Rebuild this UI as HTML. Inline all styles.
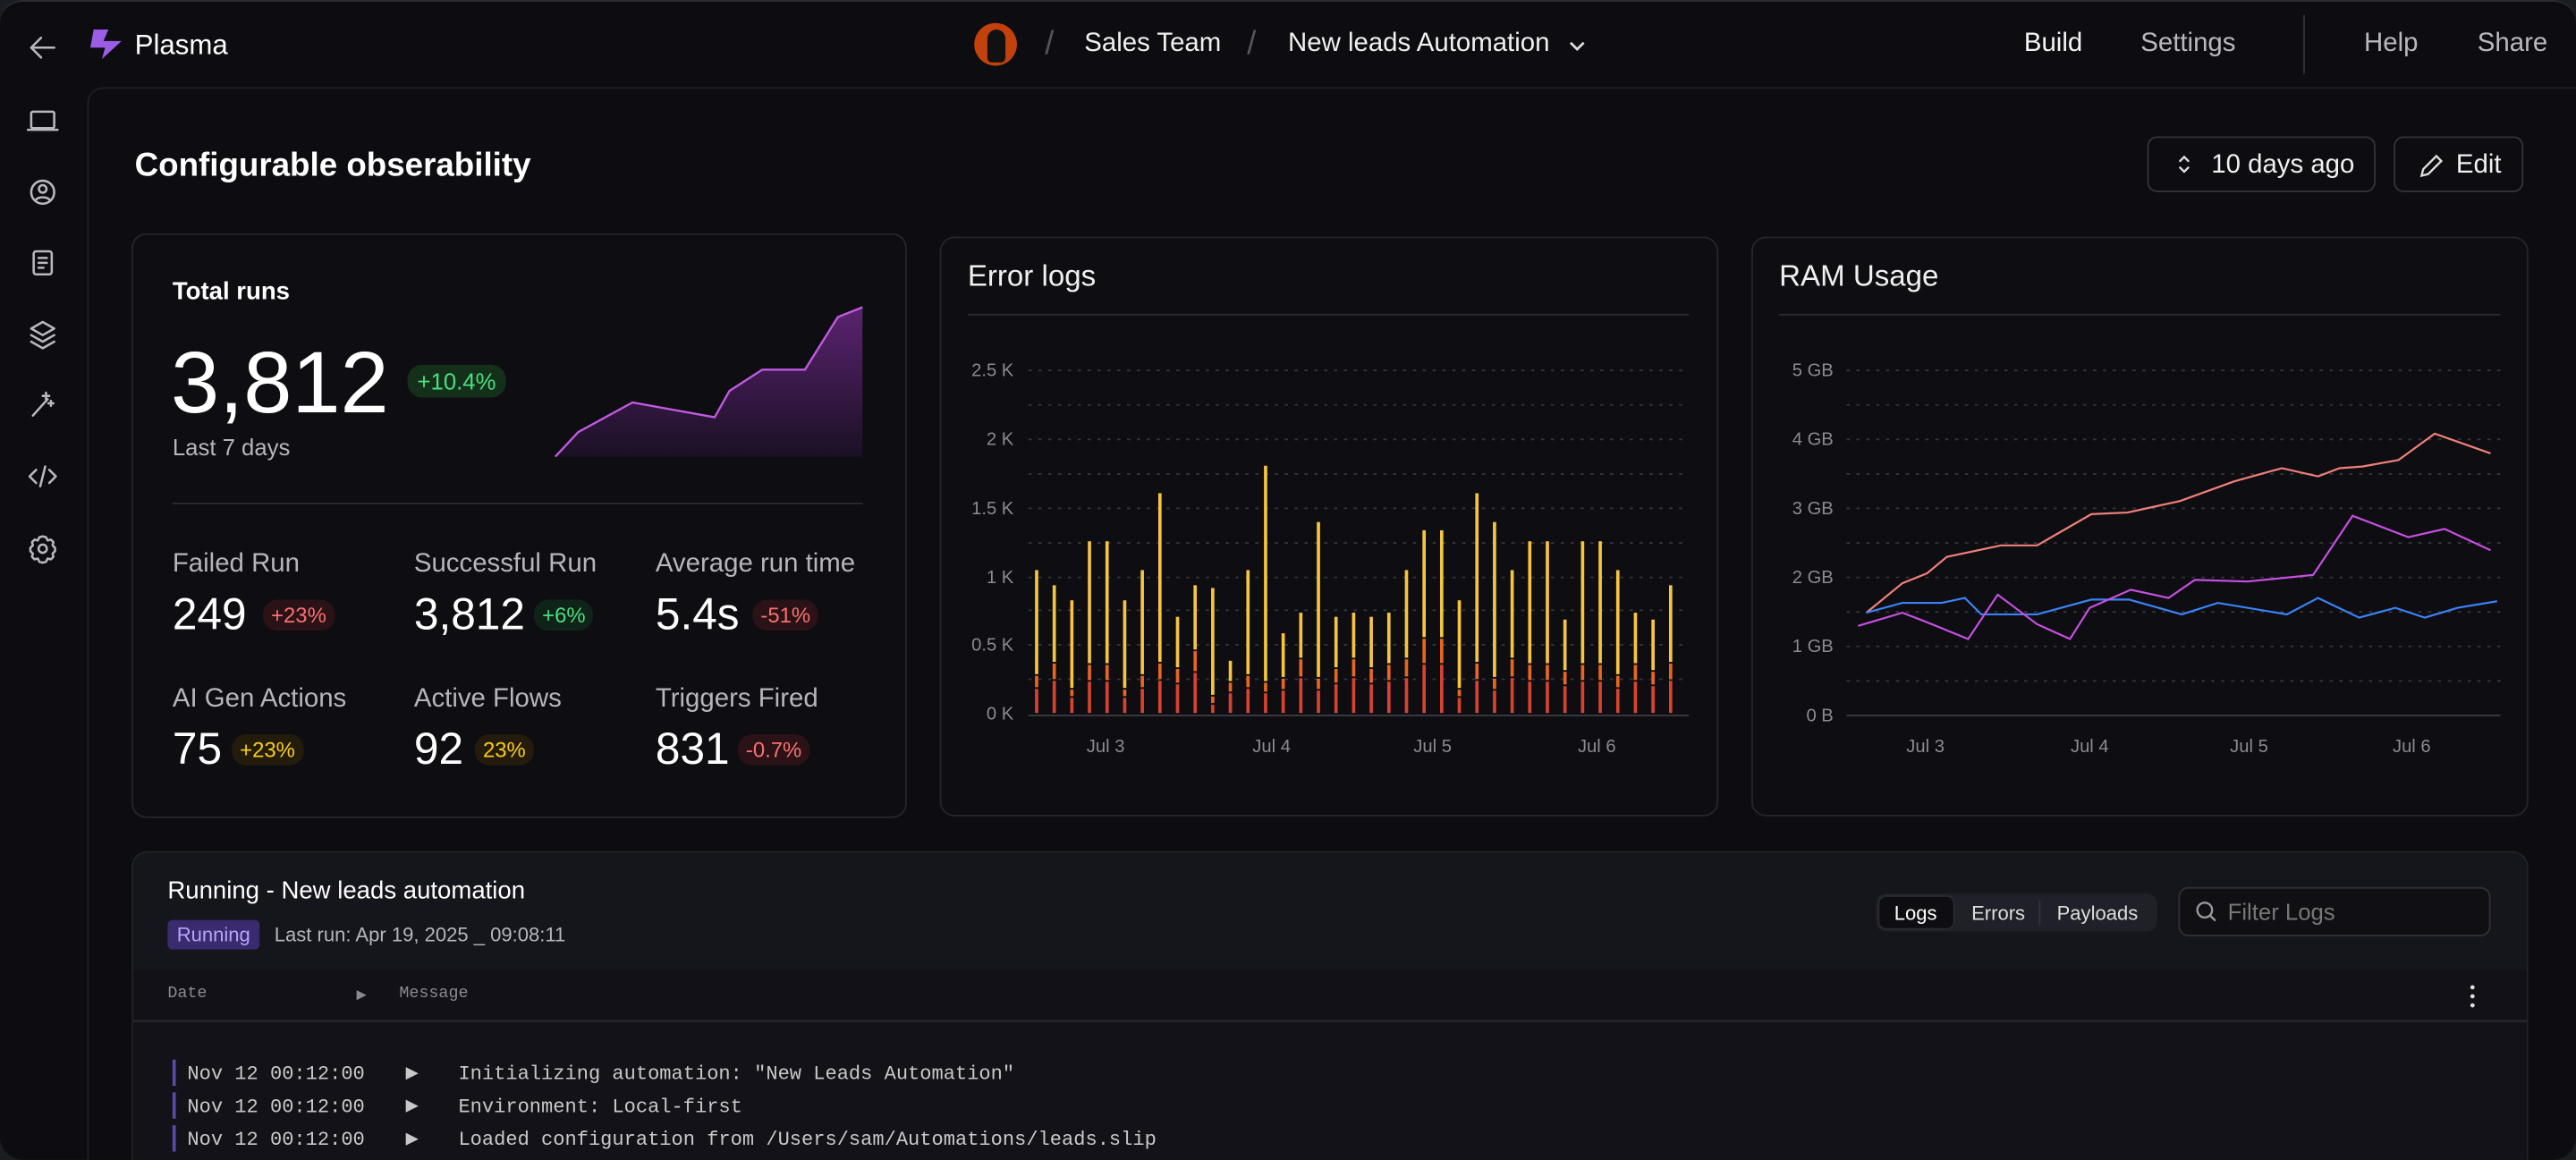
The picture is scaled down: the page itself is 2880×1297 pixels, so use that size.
<!DOCTYPE html>
<html><head><meta charset="utf-8">
<style>
*{box-sizing:border-box;margin:0;padding:0}
html,body{width:2880px;height:1296px;overflow:hidden;background:#1c1d22}
#s{position:absolute;left:0;top:0;width:1568px;height:706px;transform:scale(1.836735);transform-origin:0 0;font-family:"Liberation Sans",sans-serif;color:#eee}
.win{position:absolute;left:0;top:0;width:1568px;height:706px;background:#0c0c11;border-radius:14px;border-top:1px solid #2c2d33;overflow:hidden}
.a{position:absolute;white-space:nowrap}
.main{position:absolute;left:53px;top:52px;width:1515px;height:654px;border:1px solid #202127;border-right:0;border-bottom:0;border-radius:10px 0 0 0;background:#0c0c11}
.card{position:absolute;border:1px solid #25262c;border-radius:9px;background:#0d0d12}
.nav{font-size:16px;color:#d8d8dc;top:17px}
.lbl{font-size:16px;color:#b5b5bb}
.val{font-size:27px;color:#fff}
.bd{font-size:13px;padding:2px 5px;border-radius:9px}
.mono{font-family:"Liberation Mono",monospace}
svg{position:absolute;left:0;top:0}
</style></head><body>
<div id="s">
<div class="win">
<svg width="53" height="706" fill="none" stroke="#b8b8be" stroke-width="1.4" stroke-linecap="round" stroke-linejoin="round">
<path d="M33 28H19M25 22l-6 6 6 6"/>
<rect x="19" y="67" width="14" height="10" rx="1"/><path d="M17 78h18"/>
<circle cx="26" cy="116" r="7"/><circle cx="26" cy="114" r="2.3"/><path d="M21.5 121c1.5-2.5 7.5-2.5 9 0"/>
<rect x="20.5" y="152" width="11" height="14" rx="1.5"/><path d="M23.5 156h5M23.5 159h5M23.5 162h3"/>
<path d="M26 195l7 4-7 4-7-4z"/><path d="M19 203l7 4 7-4M19 207l7 4 7-4"/>
<path d="M20 252l9-10M28 238v4M26 240h4M31 243v3M29.5 244.5h3"/>
<path d="M22 285l-4 4 4 4M30 285l4 4-4 4M27.5 283l-3 12"/>
<circle cx="26" cy="333" r="2.5"/><path d="M26 325.5l2 .5 1 2 2-.5 1.5 1.5-.5 2 1.5 1.5v2l-1.5 1.5.5 2-1.5 1.5-2-.5-1 2-2 .5-2-.5-1-2-2 .5-1.5-1.5.5-2-1.5-1.5v-2l1.5-1.5-.5-2 1.5-1.5 2 .5 1-2z"/>
</svg>
<svg width="80" height="40"><path d="M57 17h9l-3 7h11l-12 11 2-7h-9z" fill="#9b5de5"/></svg>
<div class="a" style="left:82px;top:17px;font-size:17px;color:#fff">Plasma</div>
<div class="a" style="left:593px;top:13px;width:26px;height:26px;border-radius:50%;background:#c2410c"><div style="position:absolute;left:8px;top:4px;width:11px;height:20px;border-radius:6px 6px 3px 3px;background:#111"></div></div>
<div class="a" style="left:636px;top:15px;font-size:20px;color:#555">/</div>
<div class="a nav" style="left:660px;color:#f0f0f0">Sales Team</div>
<div class="a" style="left:759px;top:15px;font-size:20px;color:#555">/</div>
<div class="a nav" style="left:784px;color:#f0f0f0">New leads Automation</div>
<svg width="1568" height="60" fill="none" stroke="#ddd" stroke-width="1.5"><path d="M956 25l4 4 4-4"/></svg>
<div class="a nav" style="left:1232px;color:#f5f5f5">Build</div>
<div class="a nav" style="left:1303px;color:#b8b8be">Settings</div>
<div class="a" style="left:1402px;top:8px;width:1px;height:36px;background:#33343a"></div>
<div class="a nav" style="left:1439px;color:#b8b8be">Help</div>
<div class="a nav" style="left:1508px;color:#b8b8be">Share</div>

<div class="main"></div>
<div class="a" style="left:82px;top:89px;font-size:20px;font-weight:bold;color:#fff">Configurable obserability</div>
<div class="a" style="left:1307px;top:82px;width:139px;height:34px;border:1px solid #34353c;border-radius:6px"></div>
<svg width="1568" height="130" fill="none" stroke="#ddd" stroke-width="1.3" stroke-linecap="round"><path d="M1327 97l2.5-2.5 2.5 2.5M1327 101l2.5 2.5 2.5-2.5"/><path d="M1474 106l1-4 8-8 3 3-8 8z"/></svg>
<div class="a" style="left:1346px;top:91px;font-size:16px;color:#f0f0f0">10 days ago</div>
<div class="a" style="left:1457px;top:82px;width:79px;height:34px;border:1px solid #34353c;border-radius:6px"></div>
<div class="a" style="left:1495px;top:91px;font-size:16px;color:#f0f0f0">Edit</div>

<div class="card" style="left:80px;top:141px;width:472px;height:356px"></div>
<div class="a" style="left:105px;top:168px;font-size:15px;font-weight:bold;color:#fff">Total runs</div>
<div class="a" style="left:104px;top:202px;font-size:53px;color:#fff">3,812</div>
<div class="a bd" style="left:248px;top:221px;background:#14301a;color:#4ade80;font-size:14px;padding:2px 6px">+10.4%</div>
<div class="a" style="left:105px;top:263px;font-size:14px;color:#b5b5bb">Last 7 days</div>
<svg width="1568" height="706"><defs><linearGradient id="g" x1="0" y1="0" x2="0" y2="1"><stop offset="0" stop-color="#5b2370"/><stop offset="1" stop-color="#1a1024"/></linearGradient></defs>
<path d="M338 277L352 262 385 244 435 253 444 237 464 224 490 224 510 192 525 186V277Z" fill="url(#g)"/>
<path d="M338 277L352 262 385 244 435 253 444 237 464 224 490 224 510 192 525 186" fill="none" stroke="#c05ae0" stroke-width="1.3"/>
<path d="M105 305.5H525" stroke="#2a2b31"/></svg>
<div class="a lbl" style="left:105px;top:334px">Failed Run</div>
<div class="a lbl" style="left:252px;top:334px">Successful Run</div>
<div class="a lbl" style="left:399px;top:334px">Average run time</div>
<div class="a val" style="left:105px;top:358px">249</div>
<div class="a bd" style="left:160px;top:364px;background:#2a1216;color:#f87171">+23%</div>
<div class="a val" style="left:252px;top:358px">3,812</div>
<div class="a bd" style="left:325px;top:364px;background:#0f2418;color:#4ade80">+6%</div>
<div class="a val" style="left:399px;top:358px">5.4s</div>
<div class="a bd" style="left:458px;top:364px;background:#2a1216;color:#f87171">-51%</div>
<div class="a lbl" style="left:105px;top:416px">AI Gen Actions</div>
<div class="a lbl" style="left:252px;top:416px">Active Flows</div>
<div class="a lbl" style="left:399px;top:416px">Triggers Fired</div>
<div class="a val" style="left:105px;top:440px">75</div>
<div class="a bd" style="left:141px;top:446px;background:#231c0c;color:#facc15">+23%</div>
<div class="a val" style="left:252px;top:440px">92</div>
<div class="a bd" style="left:289px;top:446px;background:#231c0c;color:#facc15">23%</div>
<div class="a val" style="left:399px;top:440px">831</div>
<div class="a bd" style="left:449px;top:446px;background:#2a1216;color:#f87171">-0.7%</div>

<div class="card" style="left:572px;top:143px;width:474px;height:353px"></div>
<div class="a" style="left:589px;top:157px;font-size:18px;color:#f0f0f0">Error logs</div>
<div class="card" style="left:1066px;top:143px;width:473px;height:353px"></div>
<div class="a" style="left:1083px;top:157px;font-size:18px;color:#f0f0f0">RAM Usage</div>
<svg id="ch" width="1568" height="706" font-family="Liberation Sans, sans-serif" font-size="11" fill="#8a8a92">
<path d="M589 190.5H1028M1083 190.5H1522" stroke="#2c2d33"/>
<g stroke="#34353b" stroke-dasharray="2 4">
<path d="M626 224.5H1028M626 245.5H1028M626 266.5H1028M626 287.5H1028M626 308.5H1028M626 329.5H1028M626 350.5H1028M626 370.5H1028M626 391.5H1028M626 412.5H1028"/>
<path d="M1124 224.5H1522M1124 245.5H1522M1124 266.5H1522M1124 287.5H1522M1124 308.5H1522M1124 329.5H1522M1124 350.5H1522M1124 371.5H1522M1124 392.5H1522M1124 413.5H1522"/>
</g>
<path d="M626 434.5H1028M1124 434.5H1522" stroke="#3a3b41"/>
<g text-anchor="end"><text x="617" y="228">2.5 K</text><text x="617" y="270">2 K</text><text x="617" y="312">1.5 K</text><text x="617" y="354">1 K</text><text x="617" y="395">0.5 K</text><text x="617" y="437">0 K</text>
<text x="1116" y="228">5 GB</text><text x="1116" y="270">4 GB</text><text x="1116" y="312">3 GB</text><text x="1116" y="354">2 GB</text><text x="1116" y="396">1 GB</text><text x="1116" y="438">0 B</text></g>
<g text-anchor="middle"><text x="673" y="457">Jul 3</text><text x="774" y="457">Jul 4</text><text x="872" y="457">Jul 5</text><text x="972" y="457">Jul 6</text>
<text x="1172" y="457">Jul 3</text><text x="1272" y="457">Jul 4</text><text x="1369" y="457">Jul 5</text><text x="1468" y="457">Jul 6</text></g>
<g id="bars"></g>
<g fill="none" stroke-width="1.2">
<polyline stroke="#f0807a" points="1136,372 1158,354 1173,348 1185,338 1218,331 1240,331 1273,312 1295,311 1327,304 1360,292 1389,284 1411,289 1424,284 1438,283 1460,279 1482,263 1516,275"/>
<polyline stroke="#3b82f6" points="1136,372 1158,366 1182,366 1196,363 1206,373 1240,373 1273,364 1296,364 1328,373 1350,366 1392,373 1411,363 1436,375 1458,369 1476,375 1496,369 1520,365"/>
<polyline stroke="#c64fe0" points="1131,380 1158,372 1171,377 1198,388 1216,361 1240,379 1260,388 1272,369 1297,358 1320,363 1336,352 1368,353 1408,349 1432,313 1466,326 1488,321 1516,334"/>
</g>
</svg>

<div class="a" style="left:80px;top:517px;width:1459px;height:189px;background:#15151c;border:1px solid #222329;border-bottom:0;border-radius:10px 10px 0 0"></div>
<div class="a" style="left:81px;top:590px;width:1457px;height:31px;background:#111117;border-bottom:1px solid #2a2b31"></div>
<div class="a" style="left:81px;top:622px;width:1457px;height:84px;background:#121218"></div>
<div class="a" style="left:102px;top:533px;font-size:15px;color:#fff">Running - New leads automation</div>
<div class="a" style="left:102px;top:559px;width:56px;height:18px;border-radius:3px;background:#3a2a6e;color:#b9a3ff;font-size:12px;text-align:center;line-height:18px">Running</div>
<div class="a" style="left:167px;top:561px;font-size:12px;color:#b5b5bb">Last run: Apr 19, 2025 _ 09:08:11</div>
<div class="a" style="left:1142px;top:543px;width:171px;height:23px;border-radius:6px;background:#202128"></div>
<div class="a" style="left:1143px;top:544px;width:47px;height:21px;border-radius:5px;background:#0e0e12;border:1px solid #2a2b30"></div>
<div class="a" style="left:1241px;top:547px;width:1px;height:15px;background:#33343a"></div>
<div class="a" style="left:1153px;top:548px;font-size:12px;color:#fff">Logs</div>
<div class="a" style="left:1200px;top:548px;font-size:12px;color:#ddd">Errors</div>
<div class="a" style="left:1252px;top:548px;font-size:12px;color:#ddd">Payloads</div>
<div class="a" style="left:1326px;top:539px;width:190px;height:30px;border-radius:6px;border:1px solid #303138;background:#0f0f14"></div>
<svg width="1568" height="706" fill="none" stroke="#999" stroke-width="1.3"><circle cx="1342" cy="553" r="4.5"/><path d="M1345.5 556.5l3 3"/></svg>
<div class="a" style="left:1356px;top:546px;font-size:14px;color:#777">Filter Logs</div>
<div class="a mono" style="left:102px;top:599px;font-size:10px;color:#8a8a92">Date</div>
<div class="a" style="left:217px;top:600px;font-size:8px;color:#8a8a92">&#9654;</div>
<div class="a mono" style="left:243px;top:599px;font-size:10px;color:#8a8a92">Message</div>
<svg width="1568" height="706" fill="#ddd"><circle cx="1505" cy="600" r="1.3"/><circle cx="1505" cy="605.5" r="1.3"/><circle cx="1505" cy="611" r="1.3"/></svg>
<div class="a" style="left:105px;top:644px;width:2px;height:16px;background:#5b4aa8"></div>
<div class="a" style="left:105px;top:664px;width:2px;height:16px;background:#5b4aa8"></div>
<div class="a" style="left:105px;top:684px;width:2px;height:16px;background:#5b4aa8"></div>
<div class="a mono" style="left:114px;top:643px;font-size:12px;color:#c8c8cc;line-height:20px">Nov 12 00:12:00<br>Nov 12 00:12:00<br>Nov 12 00:12:00</div>
<div class="a" style="left:247px;top:643px;font-size:10px;color:#c8c8cc;line-height:20px">&#9654;<br>&#9654;<br>&#9654;</div>
<div class="a mono" style="left:279px;top:643px;font-size:12px;color:#c8c8cc;line-height:20px">Initializing automation: "New Leads Automation"<br>Environment: Local-first<br>Loaded configuration from /Users/sam/Automations/leads.slip</div>
</div>
</div>
<script>
var t=[1.04,.93,.82,1.25,1.25,.82,1.04,1.6,.7,.93,.91,.38,1.04,1.8,.58,.73,1.39,.7,.73,.7,.73,1.04,1.33,1.33,.82,1.6,1.39,1.04,1.25,1.25,.68,1.25,1.25,1.04,.73,.68,.93];
var s=[.27,.36,.17,.35,.35,.17,.27,.36,.32,.45,.12,.22,.27,.22,.25,.39,.25,.32,.39,.32,.35,.39,.54,.54,.17,.36,.25,.39,.35,.35,.3,.35,.35,.27,.35,.3,.36];
var h='',k=83.6,b=433;
for(var i=0;i<t.length;i++){var x=(630+i*10.72).toFixed(2),yt=b-t[i]*k,ys=b-s[i]*k,yo=ys+Math.max(5,s[i]*k*0.35);
if(yo>b-3)yo=b-3;
h+='<rect x="'+x+'" y="'+yt+'" width="2" height="'+(ys-yt-1)+'" fill="#f5c542"/>';
h+='<rect x="'+x+'" y="'+ys+'" width="2" height="'+(yo-ys-1)+'" fill="#e8661f"/>';
h+='<rect x="'+x+'" y="'+yo+'" width="2" height="'+(b-yo)+'" fill="#d8432f"/>';}
document.getElementById('bars').innerHTML=h;
</script>
</body></html>
